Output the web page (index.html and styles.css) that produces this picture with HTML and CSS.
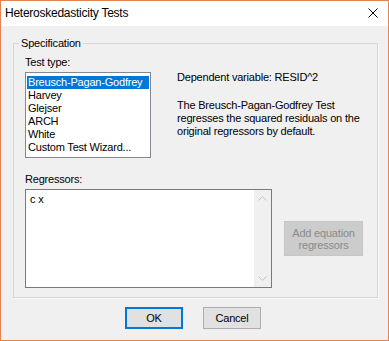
FILE: index.html
```html
<!DOCTYPE html>
<html>
<head>
<meta charset="utf-8">
<link rel="stylesheet" href="styles.css">
</head>
<body>
<div class="window">
  <div class="titlebar">
    <span class="title">Heteroskedasticity Tests</span>
    <svg class="close" width="10" height="10" viewBox="0 0 10 10"><path d="M0.5 0.5 L9.5 9.5 M9.5 0.5 L0.5 9.5" stroke="#000" stroke-width="1" fill="none"/></svg>
  </div>
  <div class="body">
    <fieldset class="group">
      <legend>Specification</legend>
      <div class="top">
        <div class="testcol">
          <div class="label">Test type:</div>
          <ul class="listbox">
            <li class="sel">Breusch-Pagan-Godfrey</li>
            <li>Harvey</li>
            <li>Glejser</li>
            <li>ARCH</li>
            <li>White</li>
            <li>Custom Test Wizard...</li>
          </ul>
        </div>
        <div class="info">
          <p>Dependent variable: RESID^2</p>
          <p>The Breusch-Pagan-Godfrey Test<br>regresses the squared residuals on the<br>original regressors by default.</p>
        </div>
      </div>
      <div class="regs">
        <div class="label">Regressors:</div>
        <div class="regrow">
          <div class="editbox">
            <div class="edittext">c x</div>
            <div class="scrollbar">
              <div class="sbtn"><svg width="9" height="5" viewBox="0 0 9 5"><path d="M0.5 4.5 L4.5 0.5 L8.5 4.5" stroke="#c4c4c4" fill="none"/></svg></div>
              <div class="sbtn"><svg width="9" height="5" viewBox="0 0 9 5"><path d="M0.5 0.5 L4.5 4.5 L8.5 0.5" stroke="#c4c4c4" fill="none"/></svg></div>
            </div>
          </div>
          <button class="addbtn" disabled>Add equation<br>regressors</button>
        </div>
      </div>
    </fieldset>
    <div class="buttons">
      <button class="btn ok">OK</button>
      <button class="btn">Cancel</button>
    </div>
  </div>
</div>
</body>
</html>
```
FILE: styles.css
```css
* { box-sizing: border-box; }
html, body { margin: 0; padding: 0; }
body {
  width: 389px;
  height: 341px;
  font-family: "Liberation Sans", Arial, sans-serif;
  font-size: 11px;
  letter-spacing: -0.2px;
  color: #000;
}
.window {
  width: 389px;
  height: 341px;
  border: 1px solid #e58350;
  background: #f0f0f0;
  display: flex;
  flex-direction: column;
}
.titlebar {
  height: 25px;
  flex: none;
  background: #fff;
  display: flex;
  align-items: center;
  justify-content: space-between;
  padding: 0 10px 0 4px;
}
.title {
  font-size: 12px;
  letter-spacing: -0.25px;
  line-height: 25px;
}
.close { display: block; margin-top: -2px; }
.body {
  flex: 1;
  display: flex;
  flex-direction: column;
}
.group {
  margin: 11px 0 0 12px;
  width: 365px;
  min-width: 0;
  padding: 6px 0 9px 11px;
  border: 1px solid #d6d6d6;
  box-shadow: 1px 1px 0 #fafafa;
}
.group legend {
  margin-left: -6px;
  padding: 0 2px;
  line-height: 13px;
}
.label { line-height: 13px; }
.top { display: flex; }
.testcol {
  width: 126px;
  flex: none;
  display: flex;
  flex-direction: column;
  gap: 3px;
}
.listbox {
  list-style: none;
  margin: 0;
  padding: 3px 1px;
  border: 1px solid #828790;
  background: #fff;
  height: 86px;
}
.listbox li {
  line-height: 13px;
  padding-left: 1px;
  white-space: nowrap;
}
.listbox li.sel { background: #0078d7; color: #fff; }
.info { margin: 15px 0 0 26px; white-space: nowrap; }
.info p { margin: 0; line-height: 13px; }
.info p + p { margin-top: 15px; }
.regs {
  margin-top: 15px;
  display: flex;
  flex-direction: column;
  gap: 3px;
}
.regrow { display: flex; align-items: center; gap: 12px; }
.editbox {
  width: 247px;
  height: 99px;
  border: 1px solid #7a7a7a;
  background: #fff;
  display: flex;
}
.edittext { flex: 1; padding: 3px 0 0 4px; line-height: 13px; }
.scrollbar {
  width: 17px;
  background: #f0f0f0;
  display: flex;
  flex-direction: column;
  justify-content: space-between;
}
.sbtn { height: 17px; display: flex; align-items: center; justify-content: center; }
.sbtn svg { display: block; }
.addbtn {
  width: 79px;
  height: 35px;
  background: #cccccc;
  border: 1px solid #c6c6c6;
  color: #8a8a8a;
  font: inherit;
  letter-spacing: inherit;
  line-height: 12px;
  padding: 0;
}
.buttons {
  display: flex;
  justify-content: center;
  gap: 20px;
  margin-top: 9px;
  padding-right: 3px;
}
.btn {
  width: 58px;
  height: 22px;
  background: #e1e1e1;
  border: 1px solid #adadad;
  font: inherit;
  letter-spacing: inherit;
  color: #000;
  padding: 0;
}
.btn.ok { border: 2px solid #0078d7; }
```
